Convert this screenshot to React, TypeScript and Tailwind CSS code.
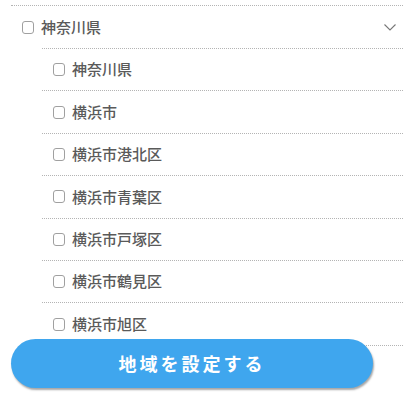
import React from 'react';

const cities = ['神奈川県', '横浜市', '横浜市港北区', '横浜市青葉区', '横浜市戸塚区', '横浜市鶴見区', '横浜市旭区'];

const Box: React.FC = () => (
  <span className="inline-block w-[12px] h-[13px] rounded-[3px] border border-[#a0a0a0] bg-white shrink-0" />
);

const App: React.FC = () => {
  return (
    <div className="relative w-[411px] h-[405px] overflow-hidden bg-white" style={{ fontFamily: '"Noto Sans CJK JP", "Noto Sans", sans-serif' }}>
      <div className="ml-[11px] mr-[8px] mt-[5px] border-t border-dotted border-[#b4b4b4]">
        <div className="h-[42px] flex items-center pl-[11px] pr-[7px] text-[15px] font-medium text-[#5a5a5a]">
          <Box />
          <span className="ml-[7px]">神奈川県</span>
          <svg className="ml-auto" width="12" height="7" viewBox="0 0 12 7" fill="none">
            <path d="M0.5 0.5 L6 6 L11.5 0.5" stroke="#777" strokeWidth="1.1" />
          </svg>
        </div>
        <ul className="ml-[31px]">
          {cities.map((c) => (
            <li key={c} className="h-[42.4px] flex items-center pl-[11px] border-t border-dotted border-[#b4b4b4] text-[15px] font-medium text-[#5a5a5a]">
              <Box />
              <span className="ml-[7px]">{c}</span>
            </li>
          ))}
          <li className="h-[42.4px] border-t border-dotted border-[#b4b4b4]" />
        </ul>
      </div>
      <button className="absolute left-[11px] top-[339px] w-[362px] h-[49px] rounded-full bg-[#3fa6ee] text-white text-[18px] font-bold tracking-[3px] shadow-[1px_2px_2px_rgba(0,0,0,0.35)]">
        地域を設定する
      </button>
    </div>
  );
};

export default App;
